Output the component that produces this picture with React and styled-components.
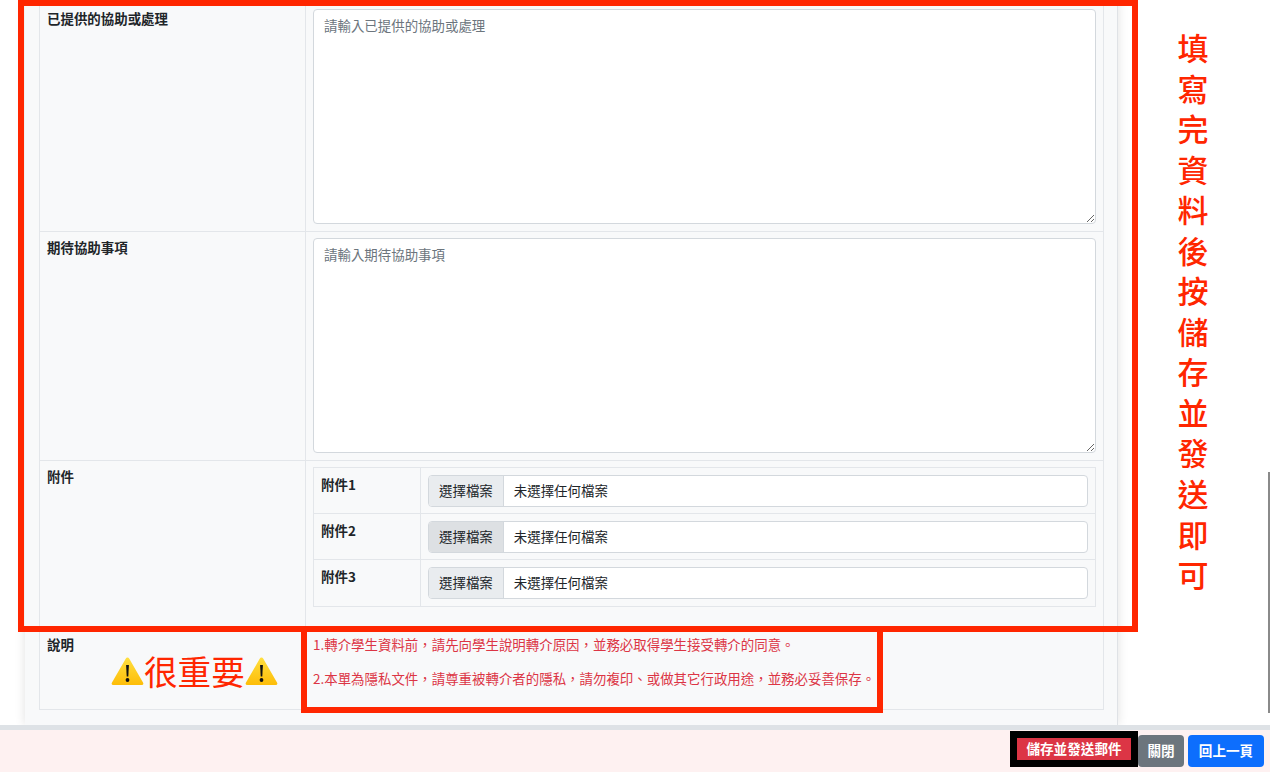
import React from "react";
import styled, { createGlobalStyle } from "styled-components";

const GlobalStyle = createGlobalStyle`
  html, body {
    margin: 0;
    padding: 0;
    background: #fff;
  }

  * {
    box-sizing: border-box;
  }

  body {
    font-family: "Noto Sans CJK TC", "Noto Sans", sans-serif;
    font-size: 13.44px;
    line-height: 1.5;
    color: #212529;
  }
`;

const Page = styled.div`
  position: relative;
  display: flex;
  flex-direction: column;
  width: 1270px;
  height: 772px;
  overflow: hidden;
`;

const Main = styled.main`
  flex: 1;
  min-height: 0;
  padding-left: 25px;
`;

const Card = styled.section`
  width: 1093px;
  height: 100%;
  padding: 3px 13px 0 14px;
  background: #f8f9fa;
  border-right: 1px solid #dfe2e6;
  box-shadow: 0 0 10px rgba(0, 0, 0, 0.12);
`;

const Table = styled.div`
  border: 1px solid #e3e6ea;
  border-top: 0;
`;

const Row = styled.div`
  display: grid;
  grid-template-columns: 266px 1fr;
  border-top: 1px solid #e3e6ea;

  &:first-child {
    border-top: 0;
  }
`;

const Label = styled.div`
  padding: 5px 7px;
  font-weight: 700;
  border-right: 1px solid #e3e6ea;
`;

const Value = styled.div`
  padding: 6px 7px 7px;
`;

const TextBox = styled.textarea`
  display: block;
  width: 100%;
  height: 215px;
  padding: 4.5px 10px;
  background: #fff;
  border: 1px solid #d3d8dd;
  border-radius: 4px;
  outline: none;
  resize: vertical;
  font-family: inherit;
  font-size: 13.44px;
  line-height: 1.5;

  &::placeholder {
    color: #6c757d;
    opacity: 1;
  }
`;

const Files = styled.div`
  margin-bottom: 14px;
  border: 1px solid #e3e6ea;
`;

const FileRow = styled.div`
  display: grid;
  grid-template-columns: 107px 1fr;
  height: 46px;
  border-bottom: 1px solid #e3e6ea;

  &:last-child {
    border-bottom: 0;
  }
`;

const FileLabel = styled.div`
  padding: 6px 7px;
  font-weight: 700;
  border-right: 1px solid #e3e6ea;
`;

const FileCell = styled.div`
  padding: 7px 7px 0;
`;

const FileGroup = styled.label`
  display: flex;
  height: 32px;
  overflow: hidden;
  background: #fff;
  border: 1px solid #d3d8dd;
  border-radius: 4px;
`;

const FileButton = styled.span`
  display: flex;
  align-items: center;
  padding: 0 10px 2px;
  background: ${(p) => (p.$hover ? "#dde0e3" : "#e9ecef")};
  border-right: 1px solid #d3d8dd;
  color: #212529;
`;

const FileName = styled.span`
  display: flex;
  align-items: center;
  padding: 0 10px 2px;
  color: #212529;
`;

const WarnLine = styled.div`
  display: flex;
  align-items: center;
  margin: -5px 0 0 64px;
  font-size: 33.6px;
  font-weight: 400;
  line-height: 44px;
  color: #ff2600;
`;

const Note = styled.p`
  margin: 0 0 13.4px;
  color: #dc3545;
  white-space: nowrap;
`;

const NoteValue = styled.div`
  padding: 5px 7px 8px;
`;

const Footer = styled.footer`
  display: flex;
  justify-content: flex-end;
  align-items: flex-end;
  flex: 0 0 47px;
  padding: 0 6px 5px 0;
  background: #fef1f1;
  border-top: 5px solid #dee2e6;
`;

const Button = styled.button`
  width: ${(p) => p.$width}px;
  height: 32px;
  padding: 0 0 2px;
  margin-left: ${(p) => (p.$gap ? 4 : 0)}px;
  color: #fff;
  background: ${(p) => p.$bg};
  border: 0;
  border-radius: 4px;
  font-family: inherit;
  font-size: 13.6px;
  font-weight: 700;
`;

const SaveButton = styled(Button)`
  height: 36px;
  background: #dc3545;
  border: 7px solid #000;
  border-radius: 0;
`;

const RedFrame = styled.div`
  position: absolute;
  left: ${(p) => p.$left}px;
  top: ${(p) => p.$top}px;
  width: ${(p) => p.$width}px;
  height: ${(p) => p.$height}px;
  border: 6px solid #ff2600;
  pointer-events: none;
`;

const SideNote = styled.div`
  position: absolute;
  left: 1177px;
  top: 27px;
  width: 32px;
  font-size: 31px;
  font-weight: 500;
  line-height: 40.55px;
  text-align: center;
  color: #ff2600;
`;

const ScrollThumb = styled.div`
  position: absolute;
  right: 0;
  top: 472px;
  width: 2px;
  height: 241px;
  background: #8a8a8a;
`;

function WarnIcon() {
  return (
    <svg width="33" height="30" viewBox="0 0 33 30" aria-hidden="true">
      <defs>
        <linearGradient id="warnFill" x1="0" y1="0" x2="0" y2="1">
          <stop offset="0" stopColor="#ffdf3f" />
          <stop offset="1" stopColor="#fdbd08" />
        </linearGradient>
      </defs>
      <path
        d="M16.5 1.5 Q17.6 1.5 18.3 2.8 L32 26.5 Q33.2 29 30.6 29 H2.4 Q-0.2 29 1 26.5 L14.7 2.8 Q15.4 1.5 16.5 1.5 Z"
        fill="url(#warnFill)"
      />
      <path d="M15.1 9 H17.9 L17.3 20.5 H15.7 Z" fill="#111" />
      <circle cx="16.5" cy="24" r="1.9" fill="#111" />
    </svg>
  );
}

const sideText = "填寫完資料後按儲存並發送即可";
const attachments = ["附件1", "附件2", "附件3"];

export default function App() {
  return (
    <Page>
      <GlobalStyle />
      <Main>
        <Card>
          <Table>
            <Row>
              <Label>已提供的協助或處理</Label>
              <Value>
                <TextBox placeholder="請輸入已提供的協助或處理" />
              </Value>
            </Row>
            <Row>
              <Label>期待協助事項</Label>
              <Value>
                <TextBox placeholder="請輸入期待協助事項" />
              </Value>
            </Row>
            <Row>
              <Label>附件</Label>
              <Value>
                <Files>
                  {attachments.map((name, i) => (
                    <FileRow key={name}>
                      <FileLabel>{name}</FileLabel>
                      <FileCell>
                        <FileGroup>
                          <FileButton $hover={i === 1}>選擇檔案</FileButton>
                          <FileName>未選擇任何檔案</FileName>
                        </FileGroup>
                      </FileCell>
                    </FileRow>
                  ))}
                </Files>
              </Value>
            </Row>
            <Row>
              <Label>
                說明
                <WarnLine>
                  <WarnIcon />
                  很重要
                  <WarnIcon />
                </WarnLine>
              </Label>
              <NoteValue>
                <Note>1.轉介學生資料前，請先向學生說明轉介原因，並務必取得學生接受轉介的同意。</Note>
                <Note>2.本單為隱私文件，請尊重被轉介者的隱私，請勿複印、或做其它行政用途，並務必妥善保存。</Note>
              </NoteValue>
            </Row>
          </Table>
        </Card>
      </Main>
      <Footer>
        <SaveButton $width={128}>儲存並發送郵件</SaveButton>
        <Button $width={46} $bg="#6c757d">關閉</Button>
        <Button $width={76} $bg="#0d6efd" $gap>回上一頁</Button>
      </Footer>
      <RedFrame $left={18} $top={0} $width={1120} $height={632} />
      <RedFrame $left={301} $top={626} $width={582} $height={87} />
      <SideNote>{sideText}</SideNote>
      <ScrollThumb />
    </Page>
  );
}
